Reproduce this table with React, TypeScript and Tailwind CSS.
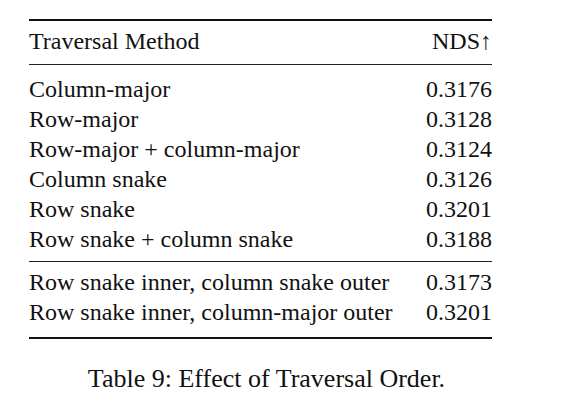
import React from 'react';

const mainRows: [string, string][] = [
  ['Column-major', '0.3176'],
  ['Row-major', '0.3128'],
  ['Row-major + column-major', '0.3124'],
  ['Column snake', '0.3126'],
  ['Row snake', '0.3201'],
  ['Row snake + column snake', '0.3188'],
];

const extraRows: [string, string][] = [
  ['Row snake inner, column snake outer', '0.3173'],
  ['Row snake inner, column-major outer', '0.3201'],
];

const Row = ({ label, value }: { label: string; value: string }) => (
  <div className="flex justify-between h-[30px] leading-[30px]">
    <span>{label}</span>
    <span>{value}</span>
  </div>
);

export default function App() {
  return (
    <div className="w-[581px] h-[409px] bg-white text-[#111] [font-family:'Liberation_Serif','Times_New_Roman',serif] overflow-hidden">
      <div className="ml-[29px] w-[463px] pt-[19px] text-[24px]">
        <div className="border-t-2 border-[#111] pt-[5px] pb-[8px] border-b border-b-[#222]">
          <div className="flex justify-between h-[30px] leading-[30px]">
            <span>Traversal Method</span>
            <span>NDS↑</span>
          </div>
        </div>
        <div className="pt-[9px] pb-[7px] border-b border-[#222]">
          {mainRows.map(([l, v]) => (
            <Row key={l} label={l} value={v} />
          ))}
        </div>
        <div className="pt-[5px] pb-[10px] border-b-2 border-[#111]">
          {extraRows.map(([l, v]) => (
            <Row key={l} label={l} value={v} />
          ))}
        </div>
      </div>
      <div className="mt-[25px] ml-[35px] w-[463px] text-center text-[26px] leading-[30px]">
        Table 9: Effect of Traversal Order.
      </div>
    </div>
  );
}
